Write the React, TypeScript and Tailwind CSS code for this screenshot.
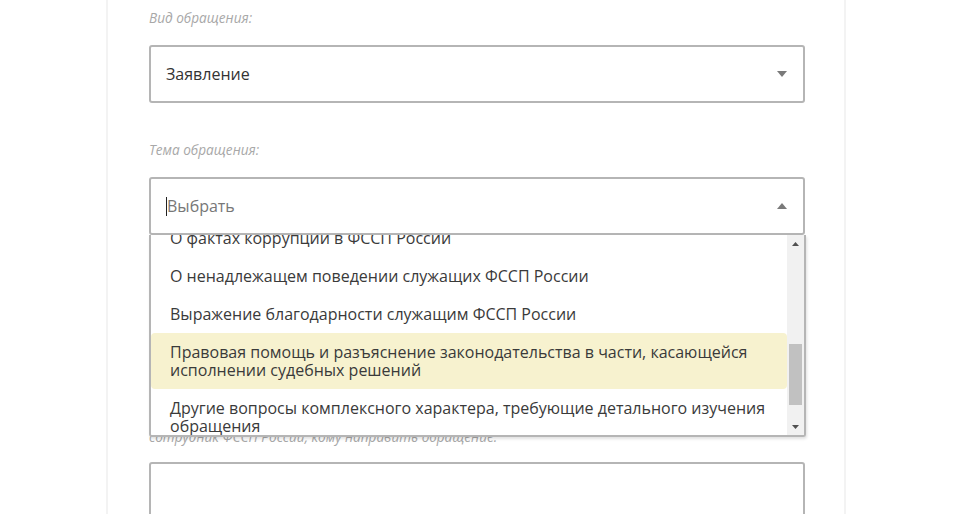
import React from 'react';

const topics = [
  'О фактах коррупции в ФССП России',
  'О ненадлежащем поведении служащих ФССП России',
  'Выражение благодарности служащим ФССП России',
  'Правовая помощь и разъяснение законодательства в части, касающейся исполнении судебных решений',
  'Другие вопросы комплексного характера, требующие детального изучения обращения',
];

const Arrow: React.FC<{ up?: boolean; className?: string }> = ({ up, className }) => (
  <svg width="10" height="6" viewBox="0 0 10 6" className={className}>
    {up ? <path d="M0 6 L5 0 L10 6 Z" fill="currentColor" /> : <path d="M0 0 L10 0 L5 6 Z" fill="currentColor" />}
  </svg>
);

const App: React.FC = () => {
  const active = 3;

  return (
    <div className="h-screen bg-white font-['Open_Sans',sans-serif] overflow-hidden">
      <div className="ml-[106px] w-[740px] h-[514px] border-x-2 border-[#f3f3f3] pl-[41px] pr-[39px] pt-[10px]">
        {/* Вид обращения */}
        <div className="h-[16px] text-[13.6px] leading-[16px] italic text-[#a8a8a8]">Вид обращения:</div>
        <div className="mt-[19px] h-[58px] border-2 border-[#b5b5b5] rounded-[3px] flex items-center justify-between pl-[15px] pr-[16px]">
          <span className="text-[16px] text-[#333]">Заявление</span>
          <Arrow className="text-[#7a7a7a]" />
        </div>

        {/* Тема обращения */}
        <div className="mt-[39px] h-[16px] text-[13.6px] leading-[16px] italic text-[#a8a8a8]">Тема обращения:</div>
        <div className="relative mt-[19px]">
          <div className="h-[58px] border-2 border-[#b5b5b5] rounded-[3px] flex items-center justify-between pl-[15px] pr-[16px]">
            <span className="flex items-center text-[16px] text-[#777]">
              <span className="w-px h-[19px] bg-[#222]" />
              <span>Выбрать</span>
            </span>
            <Arrow up className="text-[#7a7a7a]" />
          </div>

          {/* Dropdown list */}
          <div className="absolute left-0 right-[-1px] top-full z-10 h-[202px] bg-white border-x-2 border-b-2 border-[#b5b5b5] rounded-b-[3px] shadow-[1px_2px_3px_rgba(0,0,0,0.12)] flex">
            <div className="flex-1 overflow-hidden">
              <div className="-mt-[16px]">
                {topics.map((t, i) => (
                  <div
                    key={t}
                    className={
                      i === active
                        ? 'px-[19px] py-[10px] text-[16px] leading-[18px] text-[#3a3a3a] bg-[#f7f2cf] rounded-[4px]'
                        : 'px-[19px] py-[10px] text-[16px] leading-[18px] text-[#3a3a3a]'
                    }
                  >
                    {t}
                  </div>
                ))}
              </div>
            </div>
            {/* Scrollbar */}
            <div className="w-[17px] bg-[#f1f1f1] flex flex-col">
              <div className="h-[17px] flex items-center justify-center">
                <svg width="7" height="4" viewBox="0 0 7 4"><path d="M0 4 L3.5 0 L7 4 Z" fill="#505050" /></svg>
              </div>
              <div className="flex-1">
                <div className="mt-[92px] mx-[2px] h-[61px] bg-[#c1c1c1]" />
              </div>
              <div className="h-[17px] flex items-center justify-center">
                <svg width="7" height="4" viewBox="0 0 7 4"><path d="M0 0 L7 0 L3.5 4 Z" fill="#505050" /></svg>
              </div>
            </div>
          </div>
        </div>

        {/* Hint partly hidden behind dropdown */}
        <div className="mt-[194px] h-[16px] text-[13.6px] leading-[16px] italic text-[#a8a8a8] whitespace-nowrap">
          сотрудник ФССП России, кому направить обращение:
        </div>
        <div className="mt-[17px] h-[120px] border-2 border-[#b5b5b5] rounded-[3px]" />
      </div>
    </div>
  );
};

export default App;
